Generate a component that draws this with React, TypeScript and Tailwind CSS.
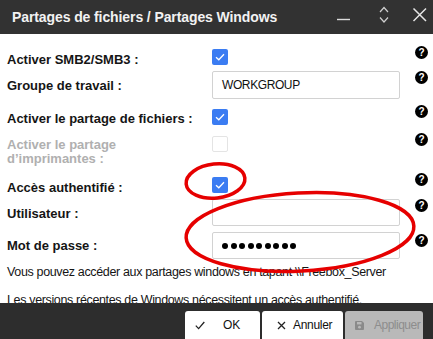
import React from "react";

function Help() {
  return (
    <span className="flex h-[13px] w-[13px] items-center justify-center rounded-full bg-black text-[10px] font-bold leading-none text-white">
      ?
    </span>
  );
}

function Check({ checked = true, disabled = false }: { checked?: boolean; disabled?: boolean }) {
  if (disabled) {
    return <span className="block h-[16px] w-[16px] rounded-[2px] border border-[#e4e4e4] bg-white" />;
  }
  return (
    <span className="flex h-[16px] w-[16px] items-center justify-center rounded-[2px] bg-[#3b7cf2]">
      {checked && (
        <svg width="10" height="8" viewBox="0 0 10 8">
          <path d="M1 4.2 L3.8 6.8 L9 1.2" fill="none" stroke="white" strokeWidth="1.3" />
        </svg>
      )}
    </span>
  );
}

function Row({
  h,
  label,
  labelPt,
  ctrlPt,
  helpPt,
  muted = false,
  children,
}: {
  h: number;
  label: React.ReactNode;
  labelPt: number;
  ctrlPt: number;
  helpPt: number;
  muted?: boolean;
  children: React.ReactNode;
}) {
  return (
    <div className="flex" style={{ height: h }}>
      <div
        className={`w-[212px] pl-[7px] text-[13px] font-bold leading-[16px] ${muted ? "text-[#b0b0b0]" : "text-[#151515]"}`}
        style={{ paddingTop: labelPt }}
      >
        {label}
      </div>
      <div className="w-[188px]" style={{ paddingTop: ctrlPt }}>
        {children}
      </div>
      <div className="flex pl-[15px]" style={{ paddingTop: helpPt }}>
        <Help />
      </div>
    </div>
  );
}

function Input({ value, h, password = false }: { value: string; h: number; password?: boolean }) {
  return (
    <div
      className="flex items-center rounded-[2px] border border-[#d2d2d2] bg-white pl-[9px] text-[12px] tracking-[-0.4px] text-[#111]"
      style={{ height: h }}
    >
      {password ? (
        <span className="flex gap-[2.5px]">
          {Array.from({ length: 9 }).map((_, i) => (
            <span key={i} className="block h-[6px] w-[6px] rounded-full bg-black" />
          ))}
        </span>
      ) : (
        value
      )}
    </div>
  );
}

export default function App() {
  return (
    <div className="relative h-[339px] w-[433px] overflow-hidden bg-white font-['Liberation_Sans',Arial,sans-serif]">
      <div className="flex h-[34px] items-center justify-between bg-[#323232] pl-[12px] pr-[5px]">
        <span className="text-[14px] font-bold tracking-[-0.1px] text-[#f2f2f2]">
          Partages de fichiers / Partages Windows
        </span>
        <div className="flex items-center">
          <svg width="20" height="34" viewBox="0 0 20 34" className="mr-[24px]">
            <path d="M3 19.5 H16" stroke="#dcdcdc" strokeWidth="1.4" />
          </svg>
          <svg width="12" height="34" viewBox="0 0 12 34" className="mr-[22px]">
            <path d="M2 12 L6 7.5 L10 12 M2 17.5 L6 22 L10 17.5" fill="none" stroke="#cfcfcf" strokeWidth="1.2" />
          </svg>
          <svg width="16" height="34" viewBox="0 0 16 34">
            <path d="M1.5 8.5 L14 21 M14 8.5 L1.5 21" stroke="#e6e6e6" strokeWidth="1.5" />
          </svg>
        </div>
      </div>

      <div className="pt-[11px]">
        <Row h={24} label="Activer SMB2/SMB3 :" labelPt={7} ctrlPt={4} helpPt={1}>
          <Check />
        </Row>
        <Row h={34} label="Groupe de travail :" labelPt={9} ctrlPt={2} helpPt={2}>
          <Input value="WORKGROUP" h={28} />
        </Row>
        <Row h={27} label="Activer le partage de fichiers :" labelPt={8} ctrlPt={6} helpPt={2}>
          <Check />
        </Row>
        <Row
          h={40}
          muted
          label={
            <span className="block leading-[14px]">
              Activer le partage
              <br />
              d’imprimantes :
            </span>
          }
          labelPt={8}
          ctrlPt={6}
          helpPt={3}
        >
          <Check disabled />
        </Row>
        <Row h={26} label="Accès authentifié :" labelPt={10} ctrlPt={7} helpPt={3}>
          <Check />
        </Row>
        <Row h={34} label="Utilisateur :" labelPt={10} ctrlPt={3} helpPt={3}>
          <Input value="" h={27} />
        </Row>
        <Row h={32} label="Mot de passe :" labelPt={8} ctrlPt={2} helpPt={4}>
          <Input value="" h={27} password />
        </Row>
        <p className="mt-[2px] pl-[7px] text-[12.5px] leading-[16px] tracking-[-0.35px] text-[#151515]">
          Vous pouvez accéder aux partages windows en tapant \\Freebox_Server
        </p>
        <p className="mt-[12px] pl-[7px] text-[12.5px] leading-[16px] tracking-[-0.35px] text-[#151515]">
          Les versions récentes de Windows nécessitent un accès authentifié.
        </p>
      </div>

      <div className="absolute bottom-0 left-0 right-0 flex h-[36px] items-end justify-end gap-[2px] bg-[#2d2d2d] pr-[10px]">
        <button className="flex h-[28px] w-[75px] items-center rounded-t-[3px] bg-white pl-[10px] text-[12px] text-[#111]">
          <svg width="10" height="9" viewBox="0 0 10 9" className="mr-[18px]">
            <path d="M0.8 4.6 L3.6 7.6 L9.3 1" fill="none" stroke="#222" strokeWidth="1.3" />
          </svg>
          OK
        </button>
        <button className="flex h-[28px] w-[81px] items-center rounded-t-[3px] bg-white pl-[15px] text-[12px] tracking-[-0.3px] text-[#111]">
          <svg width="9" height="9" viewBox="0 0 9 9" className="mr-[7px]">
            <path d="M1 1 L8 8 M8 1 L1 8" stroke="#222" strokeWidth="1.3" />
          </svg>
          Annuler
        </button>
        <button className="flex h-[28px] w-[78px] items-center overflow-hidden whitespace-nowrap rounded-t-[3px] bg-[#b9b9b9] pl-[10px] text-[12px] tracking-[-0.5px] text-[#8d8d8d]">
          <svg width="9" height="9" viewBox="0 0 9 9" className="mr-[10px] shrink-0">
            <path d="M0 1 Q0 0 1 0 H7 L9 2 V8 Q9 9 8 9 H1 Q0 9 0 8 Z" fill="#8a8a8a" />
            <rect x="2" y="1" width="4.5" height="2.4" fill="#b9b9b9" />
            <circle cx="4.5" cy="6.2" r="1.4" fill="#b9b9b9" />
          </svg>
          Appliquer
        </button>
      </div>

      <svg className="pointer-events-none absolute left-0 top-0" width="433" height="339" viewBox="0 0 433 339">
        <ellipse cx="215.5" cy="181" rx="29.5" ry="17" transform="rotate(-6 215.5 181)" fill="none" stroke="#e60000" strokeWidth="3.5" />
        <ellipse cx="300" cy="232" rx="114" ry="39" transform="rotate(-3 300 232)" fill="none" stroke="#e60000" strokeWidth="3.5" />
      </svg>
    </div>
  );
}
